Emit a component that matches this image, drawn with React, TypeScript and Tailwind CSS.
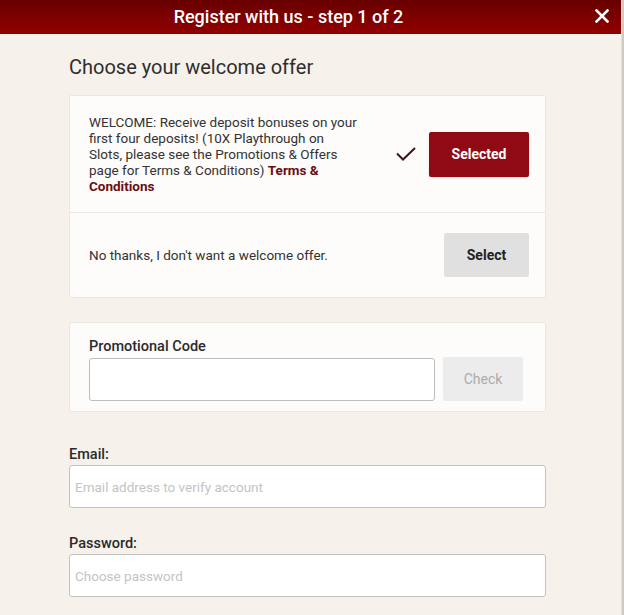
export default function App() {
    const font = { fontFamily: 'Roboto, "Liberation Sans", sans-serif' }

    return (
        <div className="flex min-h-[615px] w-[624px] bg-[#f6f2eb]" style={font}>
            <div className="w-[621px] flex flex-col">
                {/* Header */}
                <div className="relative h-[34px] bg-gradient-to-b from-[#680000] to-[#930000] flex items-center justify-center pr-[44px]">
                    <h1 className="text-white text-[18px] font-medium leading-[22px]">Register with us - step 1 of 2</h1>
                    <button className="absolute right-[12px] top-[9px] w-[14px] h-[14px]" aria-label="Close">
                        <svg viewBox="0 0 14 14" width="14" height="14">
                            <path d="M1.5 1.5 L12.5 12.5 M12.5 1.5 L1.5 12.5" stroke="#fff" strokeWidth="2.6" strokeLinecap="square" />
                        </svg>
                    </button>
                </div>

                <div className="pl-[69px] w-[546px] pt-[19px] pb-[17px]">
                    <h2 className="text-[20px] leading-[28px] text-[#2e2e2e] mb-[14px]">Choose your welcome offer</h2>

                    {/* Offers */}
                    <div className="bg-[#fdfcfa] border border-[#ebe6de] rounded-[2px]">
                        <div className="flex items-center pl-[19px] pr-[16px] py-[18px] border-b border-[#ebe6de]">
                            <p className="w-[280px] text-[13.5px] leading-[16px] text-[#333]">
                                WELCOME: Receive deposit bonuses on your<br />
                                first four deposits! (10X Playthrough on<br />
                                Slots, please see the Promotions &amp; Offers<br />
                                page for Terms &amp; Conditions){' '}
                                <span className="font-bold text-[#6b0d12]">Terms &amp;<br />Conditions</span>
                            </p>
                            <div className="flex-1" />
                            <svg viewBox="0 0 20 14" width="20" height="14" className="mr-[13px]">
                                <path d="M1 6.5 L7 12.5 L19 1" fill="none" stroke="#3d1518" strokeWidth="2" />
                            </svg>
                            <button className="w-[100px] h-[45px] bg-[#900a14] text-white text-[14px] font-bold rounded-[2px] shadow-sm">
                                Selected
                            </button>
                        </div>
                        <div className="flex items-center pl-[19px] pr-[16px] py-[20px]">
                            <p className="text-[13.5px] leading-[16px] text-[#333]">No thanks, I don't want a welcome offer.</p>
                            <div className="flex-1" />
                            <button className="w-[85px] h-[44px] bg-[#e0e0e0] text-[#222] text-[14px] font-bold rounded-[2px]">
                                Select
                            </button>
                        </div>
                    </div>

                    {/* Promo code */}
                    <div className="mt-[24px] bg-[#fdfcfa] border border-[#ebe6de] rounded-[2px] pl-[19px] pr-[22px] pt-[16px] pb-[10px]">
                        <label className="block text-[14.5px] leading-[16px] font-medium text-[#2a2a2a] mb-[2px]">Promotional Code</label>
                        <div className="flex gap-[8px] items-center">
                            <input className="flex-1 h-[43px] bg-white border border-[#bdbdbd] rounded-[3px] px-[6px] text-[13px] outline-none" />
                            <button className="w-[80px] h-[44px] bg-[#ececec] text-[#ababab] text-[14px] rounded-[2px]">
                                Check
                            </button>
                        </div>
                    </div>

                    {/* Email */}
                    <div className="mt-[35px]">
                        <label className="block text-[14.5px] leading-[16px] font-medium text-[#2a2a2a] mb-[2px]">Email:</label>
                        <input
                            className="w-full h-[43px] bg-white border border-[#c4c2be] rounded-[3px] px-[5px] text-[13.5px] placeholder:text-[#c4c4c4] outline-none"
                            placeholder="Email address to verify account"
                        />
                    </div>

                    {/* Password */}
                    <div className="mt-[28px]">
                        <label className="block text-[14.5px] leading-[16px] font-medium text-[#2a2a2a] mb-[2px]">Password:</label>
                        <input
                            type="password"
                            className="w-full h-[43px] bg-white border border-[#c4c2be] rounded-[3px] px-[5px] text-[13.5px] placeholder:text-[#c4c4c4] outline-none"
                            placeholder="Choose password"
                        />
                    </div>
                </div>
            </div>
            <div className="w-[3px] border-l border-[#e4e0d8] bg-[#cfcbc4]" />
        </div>
    )
}
